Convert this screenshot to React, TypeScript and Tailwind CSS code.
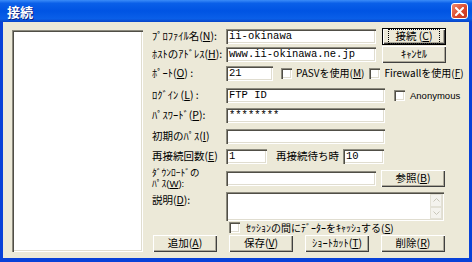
import React from "react";

const jp = "font-['MS_UI_Gothic','Noto_Sans_CJK_JP',sans-serif]";

const Acc = ({ k }: { k: string }) => (
  <>
    (<span className="underline underline-offset-1">{k}</span>)
  </>
);

const sunken =
  "bg-white shadow-[inset_1px_1px_0_#8c8a7e,inset_2px_2px_0_#504e46,inset_-1px_-1px_0_#fff,inset_-2px_-2px_0_#e0ddd0]";

const Field = ({
  w,
  value,
  h = "h-[15px]",
}: {
  w: string;
  value?: string;
  h?: string;
}) => (
  <div
    className={`${w} ${h} shrink-0 ${sunken} pl-[3px] flex items-center font-['Liberation_Mono',monospace] text-[10.5px] leading-none text-black overflow-hidden whitespace-nowrap`}
  >
    {value}
  </div>
);

const Btn = ({
  children,
  def,
  w = "w-[64px]",
}: {
  children: React.ReactNode;
  def?: boolean;
  w?: string;
}) => (
  <div
    className={`${w} h-[17px] shrink-0 bg-[#ECE9D8] flex items-center justify-center text-[10.5px] leading-none text-black ${
      def
        ? "border border-black shadow-[inset_1px_1px_0_#fff,inset_-1px_-1px_0_#404040,inset_-2px_-2px_0_#aca899]"
        : "shadow-[inset_1px_1px_0_#fff,inset_-1px_-1px_0_#404040,inset_-2px_-2px_0_#aca899]"
    }`}
  >
    {def ? (
      <span className="border border-dotted border-black px-[6px] py-[1px]">{children}</span>
    ) : (
      children
    )}
  </div>
);

const Check = () => <div className={`w-[11px] h-[11px] shrink-0 ${sunken}`} />;

const Label = ({ children, w = "w-[74px]" }: { children: React.ReactNode; w?: string }) => (
  <div className={`${w} shrink-0 text-[10.5px] leading-none text-black whitespace-nowrap`}>{children}</div>
);

export default function App() {
  return (
    <div className={`w-[472px] h-[262px] bg-[#0841d8] flex flex-col ${jp}`}>
      {/* title bar */}
      <div className="h-[22px] shrink-0 flex items-center justify-between pl-[7px] pr-[4px] bg-[linear-gradient(to_bottom,#3b8cf8_0%,#0a5fe8_15%,#0054e3_50%,#0a5fe8_85%,#0844c8_100%)]">
        <span className="text-white font-bold text-[13px] leading-none [text-shadow:1px_1px_0_#0a1e80]">
          接続
        </span>
        <div className="w-[17px] h-[16px] rounded-[3px] border border-white bg-[linear-gradient(135deg,#f08a6c,#d9452a_60%,#c23a22)] flex items-center justify-center">
          <svg width="9" height="9" viewBox="0 0 9 9">
            <path d="M1 1 L8 8 M8 1 L1 8" stroke="#fff" strokeWidth="2" strokeLinecap="square" />
          </svg>
        </div>
      </div>

      {/* client */}
      <div className="flex-1 mx-[3px] mb-[4px] bg-[#ECE9D8] flex text-black overflow-hidden">
        <div className={`ml-[9px] mt-[8px] w-[131px] h-[222px] shrink-0 ${sunken}`} />

        <div className="ml-[9px] mt-[6px] flex flex-col shrink-0">
          {/* row 1 */}
          <div className="h-[17px] flex items-center">
            <Label>
              ﾌﾟﾛﾌｧｲﾙ名<Acc k="N" />:
            </Label>
            <Field w="w-[150px]" value="ii-okinawa" />
            <div className="ml-[6px]">
              <Btn def>
                接続 <Acc k="C" />
              </Btn>
            </div>
          </div>
          {/* row 2 */}
          <div className="mt-[1px] h-[16px] flex items-center">
            <Label>
              ﾎｽﾄのｱﾄﾞﾚｽ<Acc k="H" />:
            </Label>
            <Field w="w-[150px]" value="www.ii-okinawa.ne.jp" />
            <div className="ml-[6px]">
              <Btn>ｷｬﾝｾﾙ</Btn>
            </div>
          </div>
          {/* row 3 */}
          <div className="mt-[3px] h-[16px] flex items-center">
            <Label>
              ﾎﾟｰﾄ<Acc k="O" /> :
            </Label>
            <Field w="w-[47px]" value="21" />
            <div className="ml-[8px] flex items-center gap-[4px]">
              <Check />
              <span className="text-[10px] leading-none whitespace-nowrap">
                PASVを使用<Acc k="M" />
              </span>
            </div>
            <div className="ml-[5px] flex items-center gap-[4px]">
              <Check />
              <span className="text-[10px] leading-none whitespace-nowrap">
                Firewallを使用<Acc k="F" />
              </span>
            </div>
          </div>
          {/* row 4 */}
          <div className="mt-[6px] h-[17px] flex items-center">
            <Label>
              ﾛｸﾞｲﾝ <Acc k="L" /> :
            </Label>
            <Field w="w-[159px]" value="FTP ID" />
            <div className="ml-[9px] flex items-center gap-[5px]">
              <Check />
              <span className="text-[9.5px] leading-none font-['Liberation_Sans',sans-serif]">Anonymous</span>
            </div>
          </div>
          {/* row 5 */}
          <div className="mt-[3px] h-[16px] flex items-center">
            <Label>
              ﾊﾟｽﾜｰﾄﾞ<Acc k="P" />:
            </Label>
            <Field w="w-[159px]" value="********" />
          </div>
          {/* row 6 */}
          <div className="mt-[5px] h-[16px] flex items-center">
            <Label>
              初期のﾊﾟｽ<Acc k="I" />
            </Label>
            <Field w="w-[159px]" />
          </div>
          {/* row 7 */}
          <div className="mt-[4px] h-[16px] flex items-center">
            <Label>
              再接続回数<Acc k="E" />
            </Label>
            <Field w="w-[41px]" value="1" />
            <span className="ml-[9px] w-[67px] text-[10.5px] leading-none whitespace-nowrap">再接続待ち時</span>
            <Field w="w-[41px]" value="10" />
          </div>
          <div className="mt-[4px] h-[20px] flex items-center">
            <Label>
              <div className="leading-[11px] text-[9.5px] font-['Liberation_Sans','Noto_Sans_CJK_JP',sans-serif]">
                <div>ﾀﾞｳﾝﾛｰﾄﾞの</div>
                <div>
                  ﾊﾟｽ<Acc k="W" />:
                </div>
              </div>
            </Label>
            <Field w="w-[150px]" />
            <div className="ml-[5px]">
              <Btn>
                参照<Acc k="B" />
              </Btn>
            </div>
          </div>
          {/* row 9 */}
          <div className="mt-[4px] h-[30px] flex items-start">
            <Label>
              <div className="mt-[3px]">
                説明<Acc k="D" />:
              </div>
            </Label>
            <div className={`w-[218px] h-[29px] shrink-0 ${sunken} flex justify-end p-[2px]`}>
              <div className="w-[12px] h-full flex flex-col">
                <div className="flex-1 bg-[#f4f3ee] border border-[#e3e1d6] flex items-center justify-center">
                  <svg width="7" height="4" viewBox="0 0 7 4">
                    <path d="M0.5 3.5 L3.5 0.5 L6.5 3.5" stroke="#c9c7ba" fill="none" />
                  </svg>
                </div>
                <div className="flex-1 bg-[#f4f3ee] border border-[#e3e1d6] flex items-center justify-center">
                  <svg width="7" height="4" viewBox="0 0 7 4">
                    <path d="M0.5 0.5 L3.5 3.5 L6.5 0.5" stroke="#c9c7ba" fill="none" />
                  </svg>
                </div>
              </div>
            </div>
          </div>
          {/* row 10 */}
          <div className="h-[11px] flex items-center pl-[77px] gap-[6px]">
            <Check />
            <span className="text-[10px] leading-none whitespace-nowrap">
              ｾｯｼｮﾝの間にﾃﾞｰﾀｰをｷｬｯｼｭする<Acc k="S" />
            </span>
          </div>
          {/* row 11 */}
          <div className="mt-[2px] h-[17px] flex items-center gap-[12px] pl-[1px]">
            <Btn>
              追加<Acc k="A" />
            </Btn>
            <Btn>
              保存<Acc k="V" />
            </Btn>
            <Btn>
              ｼｮｰﾄｶｯﾄ<Acc k="T" />
            </Btn>
            <Btn>
              削除<Acc k="R" />
            </Btn>
          </div>
        </div>
      </div>
    </div>
  );
}
